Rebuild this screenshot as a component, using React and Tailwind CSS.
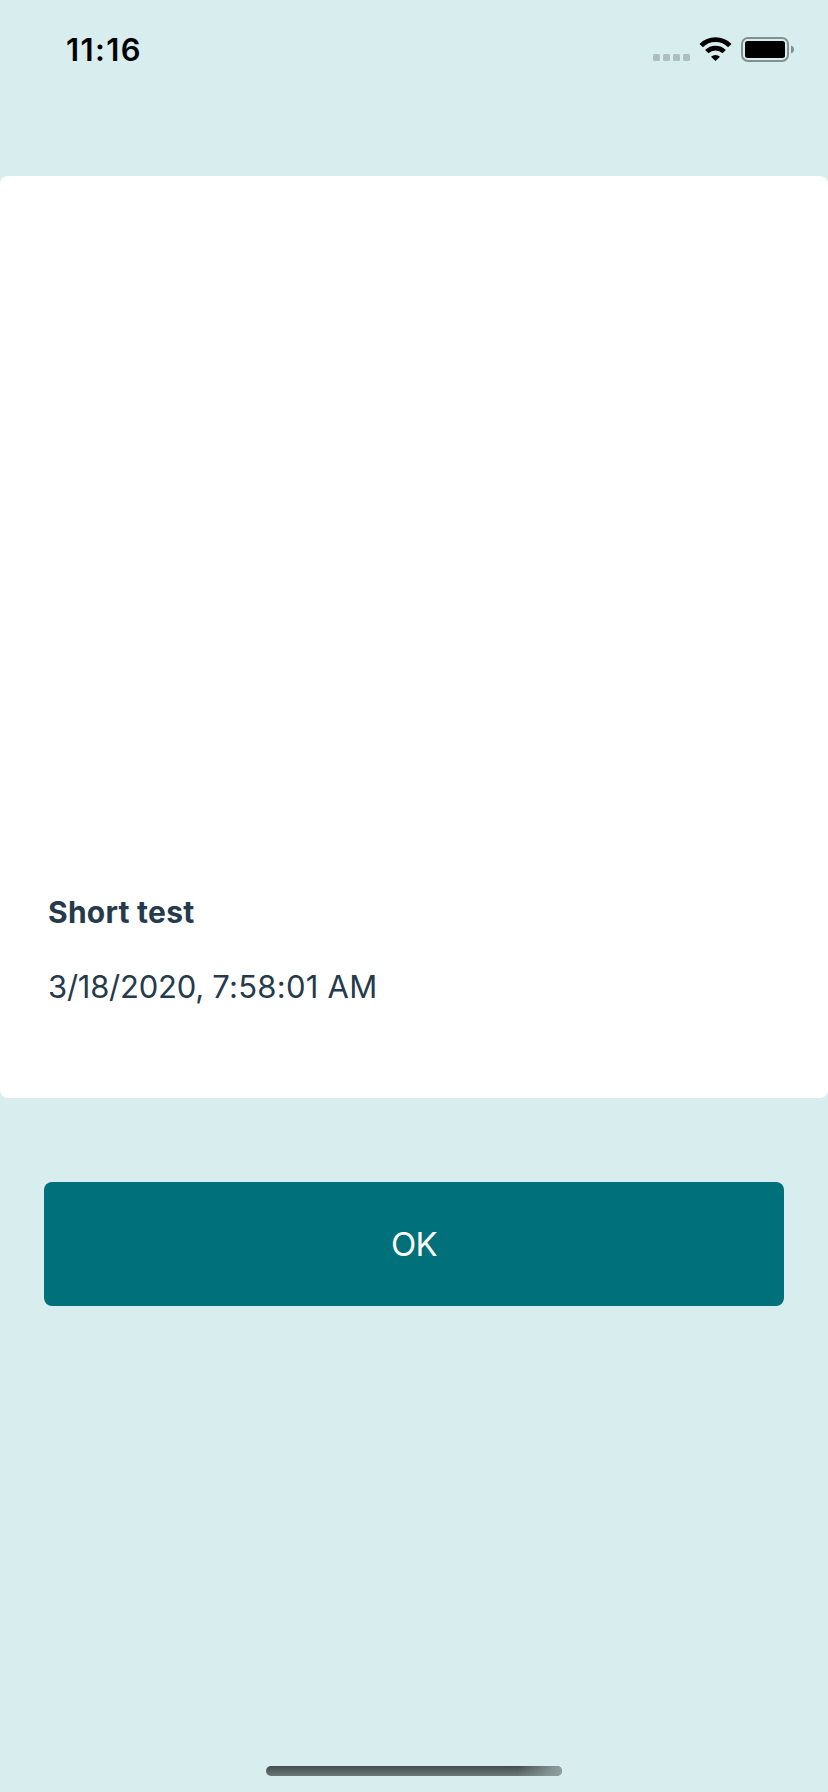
function StatusBar() {
  return (
    <header className="flex h-[176px] items-start justify-between pt-[32px] pr-[34px] pl-[66px] text-black">
      <span className="text-[31px] leading-[36px] font-semibold tracking-[1.4px]">11:16</span>
      <div className="flex h-[36px] items-start">
        <svg className="mt-[4px] h-[27px] w-[141px]" viewBox="653 36 141 27" aria-hidden="true">
          <g fill="#adbebf">
            <rect x="653" y="54" width="7" height="7" rx="1.5" />
            <rect x="663" y="54" width="7" height="7" rx="1.5" />
            <rect x="673" y="54" width="7" height="7" rx="1.5" />
            <rect x="683" y="54" width="7" height="7" rx="1.5" />
          </g>
          <g fill="none" stroke="#000" strokeWidth="4.8">
            <path d="M701.2 45.6a20.3 20.3 0 0 1 28.6 0" />
            <path d="M706.8 51.6a12.4 12.4 0 0 1 17.4 0" />
          </g>
          <path d="M715.5 61l-4.5-4.2a6.6 6.6 0 0 1 9 0z" fill="#000" />
          <rect x="742" y="38" width="46" height="23" rx="6" fill="none" stroke="#829091" strokeWidth="2" />
          <rect x="745" y="41" width="40" height="17" rx="2.5" fill="#000" />
          <path d="M791 45.5c4 1.2 4 6.8 0 8z" fill="#829091" />
        </svg>
      </div>
    </header>
  );
}

export default function App() {
  return (
    <div className="flex h-[1792px] w-[828px] flex-col overflow-hidden bg-[#d8eded] font-['Inter',sans-serif]">
      <StatusBar />
      <main className="flex flex-1 flex-col">
        <section className="flex h-[922px] flex-col justify-end rounded-lg bg-white px-[48px] pb-[93px] text-[#253a4b]">
          <h1 className="text-[30px] leading-[36px] font-bold tracking-[0.25px]">Short test</h1>
          <p className="mt-[39px] text-[31px] leading-[36px]">
            <span className="tracking-[-0.25px]">3/18/2020, </span>
            <span className="tracking-[0.25px]">7:58:01 AM</span>
          </p>
        </section>
        <button
          type="button"
          className="mx-[44px] mt-[84px] flex h-[124px] items-center justify-center rounded-lg bg-[#00717a] text-[33px] leading-[40px] tracking-[-0.8px] text-white"
        >
          OK
        </button>
      </main>
      <footer className="flex justify-center pb-[16px]">
        <div className="h-[10px] w-[296px] overflow-hidden rounded-full bg-linear-to-b from-[#424c4c] to-[#6c7878]">
          <div className="ml-auto h-full w-[44px] bg-linear-to-r from-[#91a1a1]/0 to-[#91a1a1]" />
        </div>
      </footer>
    </div>
  );
}
